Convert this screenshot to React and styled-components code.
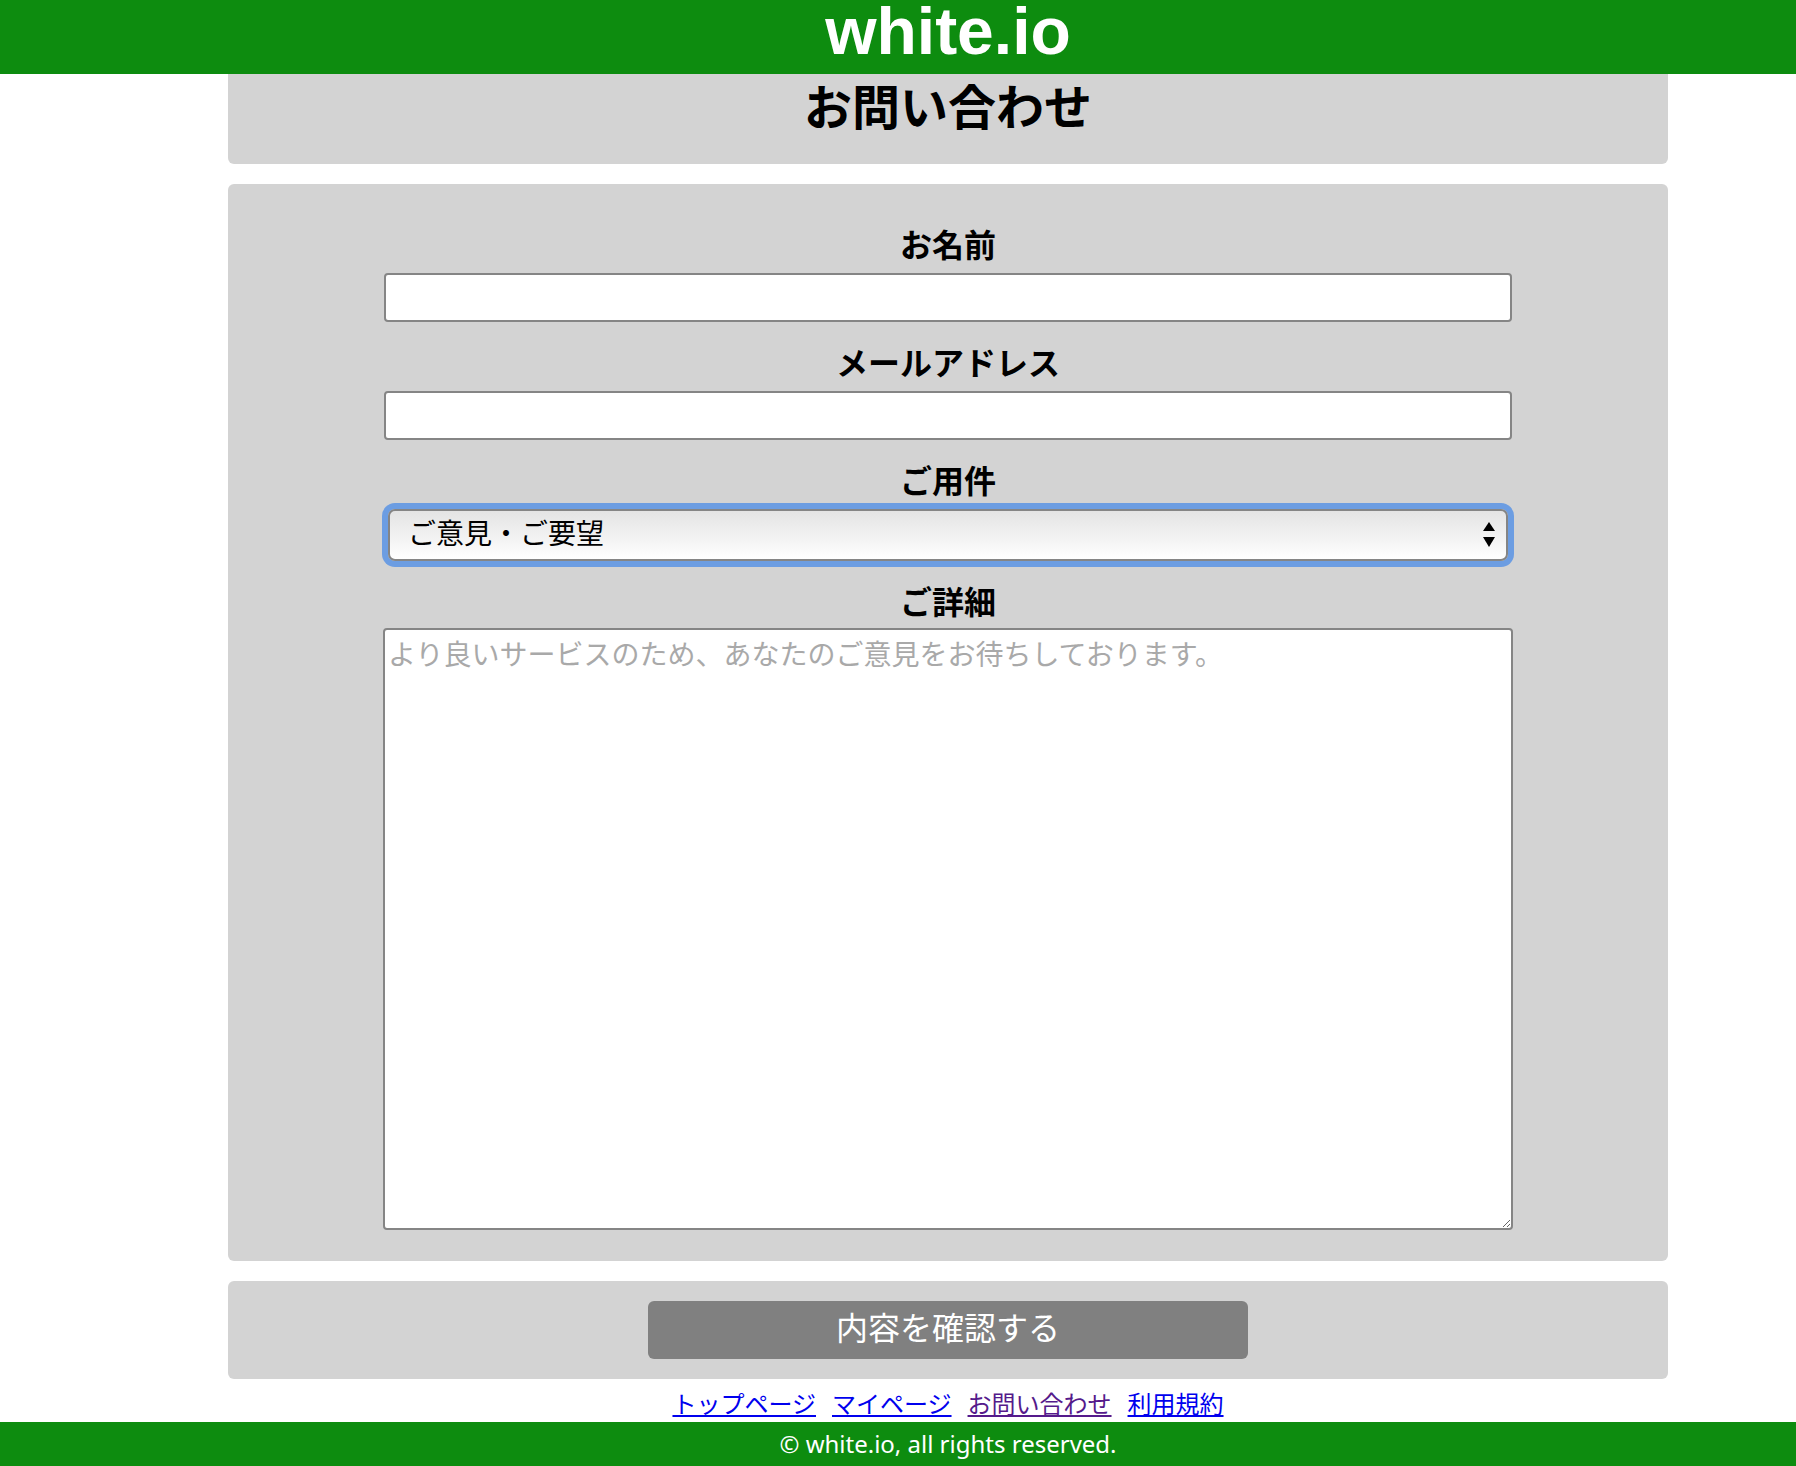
import styled, { createGlobalStyle } from 'styled-components';

const GlobalStyle = createGlobalStyle`
    html, body {
        margin: 0;
        padding: 0;
        overflow: hidden;
        background: #ffffff;
        font-family: "Noto Sans CJK JP", "Noto Sans", sans-serif;
    }
    * {
        box-sizing: border-box;
    }
`;

function Arrows() {
    return (
        <svg width="12" height="25" viewBox="0 0 12 25">
            <path d="M6 0 L12 9 L0 9 Z" fill="#000" />
            <path d="M0 15 L12 15 L6 25 Z" fill="#000" />
        </svg>
    );
}

function App() {
    return (
        <>
            <GlobalStyle />
            <Header>white.io</Header>
            <Main>
                <TitleCard>
                    <Title>お問い合わせ</Title>
                </TitleCard>
                <FormCard>
                    <Field>
                        <Label>お名前</Label>
                        <Input type="text" />
                    </Field>
                    <Field>
                        <Label>メールアドレス</Label>
                        <Input type="email" />
                    </Field>
                    <Field>
                        <Label>ご用件</Label>
                        <SelectWrap>
                            <Select defaultValue="opinion">
                                <option value="opinion">ご意見・ご要望</option>
                                <option value="bug">不具合のご報告</option>
                                <option value="other">その他</option>
                            </Select>
                            <ArrowBox><Arrows /></ArrowBox>
                        </SelectWrap>
                    </Field>
                    <Field>
                        <Label $tight>ご詳細</Label>
                        <TextArea placeholder="より良いサービスのため、あなたのご意見をお待ちしております。" />
                    </Field>
                </FormCard>
                <ButtonCard>
                    <SubmitButton type="button">内容を確認する</SubmitButton>
                </ButtonCard>
                <Links>
                    <NavLink href="#top">トップページ</NavLink>
                    <NavLink href="#mypage">マイページ</NavLink>
                    <NavLink href="#contact" $visited>お問い合わせ</NavLink>
                    <NavLink href="#terms">利用規約</NavLink>
                </Links>
            </Main>
            <Footer>© white.io, all rights reserved.</Footer>
        </>
    );
}

export default App;

const Header = styled.header`
    height: 74px;
    padding: 0 0 11px 100px;
    background-color: #0d8c0f;
    color: #ffffff;
    text-align: center;
    font-family: "Liberation Sans", Arial, sans-serif;
    font-weight: bold;
    font-size: 66px;
    line-height: 63px;
`;

const Main = styled.main`
    display: flex;
    flex-direction: column;
    align-items: center;
    gap: 20px;
    padding-left: 100px;
`;

const Card = styled.div`
    width: 1440px;
    background-color: #d3d3d3;
    border-radius: 6px;
`;

const TitleCard = styled(Card)`
    border-radius: 0 0 6px 6px;
    padding-bottom: 30px;
`;

const Title = styled.h1`
    margin: 0;
    text-align: center;
    font-size: 48px;
    font-weight: bold;
    line-height: 60px;
`;

const FormCard = styled(Card)`
    display: flex;
    flex-direction: column;
    align-items: center;
    gap: 21px;
    padding: 41px 0 31px;
`;

const Field = styled.div`
    display: flex;
    flex-direction: column;
    align-items: center;
`;

const Label = styled.label`
    margin-bottom: ${(p) => (p.$tight ? '10px' : '12px')};
    font-size: 32px;
    font-weight: bold;
    line-height: 36px;
    color: #000000;
`;

const Input = styled.input`
    width: 1128px;
    height: 49px;
    padding: 0 8px;
    border: 2px solid #858585;
    border-radius: 4px;
    background: #ffffff;
    font-family: inherit;
    font-size: 26px;
    outline: none;
`;

const SelectWrap = styled.div`
    position: relative;
    width: 1120px;
    height: 52px;
    border-radius: 7px;
    box-shadow: 0 0 0 6px #6c9de2;
`;

const Select = styled.select`
    appearance: none;
    width: 100%;
    height: 100%;
    padding: 0 40px 7px 18px;
    border: 2px solid #858585;
    border-radius: 7px;
    background: linear-gradient(#e4e4e4, #f2f2f2 55%, #ffffff);
    color: #000000;
    font-family: inherit;
    font-size: 28px;
    outline: none;
`;

const ArrowBox = styled.span`
    position: absolute;
    top: 13px;
    right: 13px;
    display: flex;
    pointer-events: none;
`;

const TextArea = styled.textarea`
    width: 1130px;
    height: 602px;
    padding: 3px 3px;
    border: 2px solid #858585;
    border-radius: 4px;
    background: #ffffff;
    font-family: inherit;
    font-size: 28px;
    outline: none;
    &::placeholder {
        color: #a9a9a9;
    }
`;

const ButtonCard = styled(Card)`
    display: flex;
    justify-content: center;
    padding: 20px 0;
`;

const SubmitButton = styled.button`
    width: 600px;
    height: 58px;
    padding: 0 0 8px;
    border: none;
    border-radius: 6px;
    background-color: #808080;
    color: #ffffff;
    font-family: inherit;
    font-size: 32px;
    cursor: pointer;
`;

const Links = styled.nav`
    display: flex;
    justify-content: center;
    align-items: center;
    gap: 16px;
    margin-top: -20px;
    height: 43px;
    padding-top: 4px;
`;

const NavLink = styled.a`
    font-size: 24px;
    line-height: 30px;
    color: ${(p) => (p.$visited ? '#551a8b' : '#0000ee')};
    text-decoration: underline;
`;

const Footer = styled.footer`
    height: 44px;
    padding-left: 100px;
    background-color: #0d8c0f;
    color: #ffffff;
    text-align: center;
    font-family: "Noto Sans", "Liberation Sans", sans-serif;
    font-size: 24px;
    line-height: 44px;
`;
